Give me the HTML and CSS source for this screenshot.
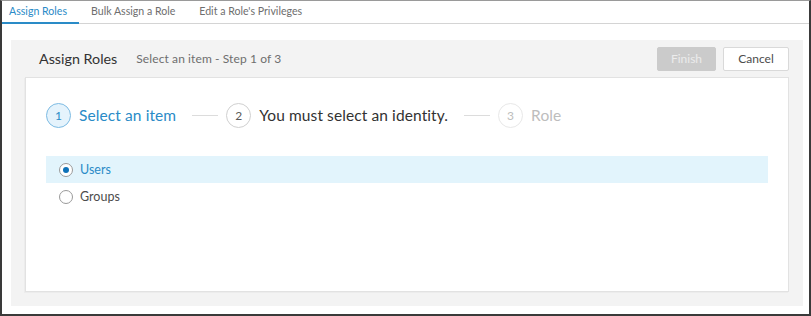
FILE: index.html
```html
<!DOCTYPE html>
<html>
<head>
<meta charset="utf-8">
<link rel="stylesheet" href="styles.css">
</head>
<body>
<div class="frame">
  <nav class="tabs">
    <a class="tab active">Assign Roles</a>
    <a class="tab">Bulk Assign a Role</a>
    <a class="tab">Edit a Role's Privileges</a>
  </nav>
  <section class="panel">
    <header class="panel-head">
      <h1 class="title">Assign Roles</h1>
      <span class="subtitle">Select an item - Step 1 of 3</span>
      <div class="actions">
        <button class="btn btn-disabled">Finish</button>
        <button class="btn btn-clear">Cancel</button>
      </div>
    </header>
    <div class="card">
      <ol class="steps">
        <li class="step current"><span class="num">1</span><span class="label">Select an item</span></li>
        <li class="sep"></li>
        <li class="step next"><span class="num">2</span><span class="label">You must select an identity.</span></li>
        <li class="sep"></li>
        <li class="step later"><span class="num">3</span><span class="label">Role</span></li>
      </ol>
      <ul class="options">
        <li class="option selected"><span class="radio"></span><span class="opt-label">Users</span></li>
        <li class="option"><span class="radio"></span><span class="opt-label">Groups</span></li>
      </ul>
    </div>
  </section>
</div>
</body>
</html>
```
FILE: styles.css
```css
* { box-sizing: border-box; }
html, body { margin: 0; padding: 0; background: #fff; }
body { font-family: "Lato", "Open Sans", sans-serif; color: #4c4c4c; }

.frame {
  width: 811px;
  height: 316px;
  border: 2px solid #3a3a3a;
  border-top: 1px solid #9a9a9a;
  display: flex;
  flex-direction: column;
}

.tabs {
  display: flex;
  height: 23px;
  border-bottom: 1px solid #d4d4d4;
  flex-shrink: 0;
}
.tab {
  font-size: 10.6px;
  color: #6e6e6e;
  padding: 4px 12px 0 12px;
  border-bottom: 2px solid transparent;
  margin-bottom: -1px;
  white-space: nowrap;
}
.tab:first-child { padding-left: 7px; }
.tab.active { color: #2a8bc7; border-bottom-color: #2a8bc7; }

.panel {
  margin: 16px 6px 8px 9px;
  background: #f3f3f3;
  padding: 0 14px 14px 14px;
  flex: 1;
  display: flex;
  flex-direction: column;
}
.panel-head {
  height: 37px;
  display: flex;
  align-items: center;
  padding-left: 14px;
}
.title {
  margin: 0;
  font-size: 14.3px;
  font-weight: 400;
  color: #323232;
}
.subtitle {
  margin-left: 19px;
  font-size: 12px;
  letter-spacing: 0.1px;
  color: #6e6e6e;
}
.actions {
  margin-left: auto;
  display: flex;
  gap: 7px;
}
.btn {
  font-family: inherit;
  height: 24px;
  font-size: 12px;
  border-radius: 2px;
  padding: 0;
}
.btn-disabled {
  width: 59px;
  background: #cbcbcb;
  border: 1px solid #cbcbcb;
  color: #ececec;
}
.btn-clear {
  width: 66px;
  background: #fff;
  border: 1px solid #d9d9d9;
  color: #4c4c4c;
}

.card {
  flex: 1;
  background: #fff;
  border: 1px solid #e2e2e2;
  box-shadow: -1px 1px 0 #ececec;
  padding: 24px 20px 0 20px;
}

.steps {
  list-style: none;
  margin: 0;
  padding: 0;
  display: flex;
  align-items: center;
  height: 26px;
}
.step { display: flex; align-items: center; }
.num {
  width: 25px;
  height: 25px;
  border-radius: 50%;
  border: 1px solid #ccc;
  display: flex;
  align-items: center;
  justify-content: center;
  font-size: 12px;
  margin-right: 8px;
}
.label { font-size: 15.5px; letter-spacing: 0.1px; }
.current .num { border-color: #7dbbe3; background: #e5f3fc; color: #2a8bc7; }
.current .label { color: #2a8bc7; }
.next .num { border-color: #d0d0d0; color: #595959; }
.next .label { color: #323232; }
.later .num { border-color: #e8e8e8; color: #bdbdbd; }
.later .label { color: #bdbdbd; }
.sep {
  width: 26px;
  height: 1px;
  background: #dcdcdc;
  margin: 0 8px 0 16px;
}

.options {
  list-style: none;
  margin: 28px 0 0 0;
  padding: 0;
}
.option {
  height: 27px;
  display: flex;
  align-items: center;
  padding-left: 13px;
  font-size: 12.5px;
}
.option.selected { background: #e2f4fc; }
.radio {
  width: 14px;
  height: 14px;
  border-radius: 50%;
  border: 1px solid #9a9a9a;
  background: #fff;
  margin-right: 7px;
  display: flex;
  align-items: center;
  justify-content: center;
}
.selected .radio::after {
  content: "";
  width: 6px;
  height: 6px;
  border-radius: 50%;
  background: #0f72b8;
}
.selected .opt-label { color: #2a8bc7; }
```
